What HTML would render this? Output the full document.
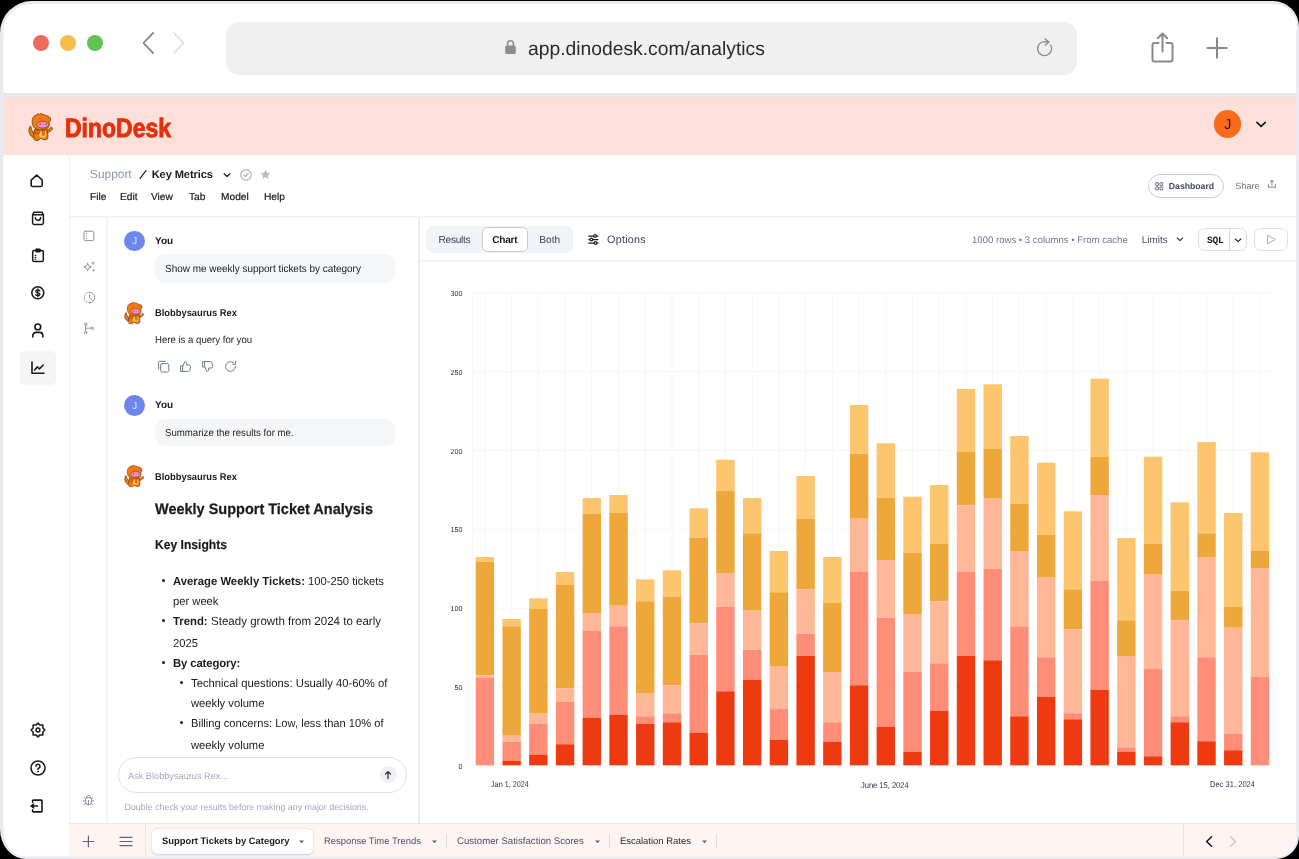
<!DOCTYPE html>
<html lang="en">
<head>
<meta charset="utf-8">
<title>DinoDesk Analytics</title>
<style>
*{box-sizing:border-box;margin:0;padding:0}
html,body{width:1299px;height:859px;overflow:hidden;background:#000}
body{font-family:"Liberation Sans",sans-serif;color:#111;position:relative;text-rendering:geometricPrecision}
.abs{position:absolute}
#frame{position:absolute;left:0;top:1px;width:1299px;height:858px;border:solid #e9eaf0;border-width:3px 2px 2px 3px;border-radius:32px 26px 23px 26px/32px 26px 23px 30px;background:#fff;overflow:hidden}
/* everything inside #page is positioned in full-image coordinates */
#page{position:absolute;left:-3px;top:-4px;width:1299px;height:859px;will-change:transform}
.t{position:absolute;white-space:nowrap;line-height:1}
svg{position:absolute;overflow:visible}
.ln{position:absolute;background:#e9eaf1}
.av{width:20.8px;height:20.8px;border-radius:50%;background:#6e86ea}
.bub{background:#f5f6f8;border-radius:9.5px}
.mn{font-size:10.2px;color:#161616;-webkit-text-stroke:.18px #161616}
</style>
</head>
<body>
<div id="frame"><div id="page">

<!-- ===== BROWSER CHROME ===== -->
<div class="abs" style="left:0;top:0;width:1299px;height:93px;background:#fff"></div>
<div class="abs" style="left:0;top:93px;width:1299px;height:4px;background:#e7e7e8"></div>
<div class="abs" style="left:33.3px;top:34.5px;width:16px;height:16px;border-radius:50%;background:#ed6a5e"></div>
<div class="abs" style="left:59.9px;top:34.5px;width:16px;height:16px;border-radius:50%;background:#f4bc4c"></div>
<div class="abs" style="left:87px;top:34.5px;width:16px;height:16px;border-radius:50%;background:#5fc452"></div>
<svg style="left:140px;top:30px" width="50" height="26" viewBox="0 0 50 26" fill="none" stroke-linecap="round" stroke-linejoin="round">
  <path d="M13.2 2.8 L3.4 13 L13.2 23.2" stroke="#808080" stroke-width="1.7"/>
  <path d="M33.8 2.8 L43.6 13 L33.8 23.2" stroke="#dedede" stroke-width="1.6"/>
</svg>
<div class="abs" style="left:226px;top:22px;width:851px;height:53px;border-radius:13px;background:#f0f0f0"></div>
<svg style="left:504px;top:39px" width="13" height="16" viewBox="0 0 13 16">
  <path d="M3.6 7 V4.6 a2.9 2.9 0 0 1 5.8 0 V7" fill="none" stroke="#8d8d8d" stroke-width="1.6"/>
  <rect x="1.2" y="6.6" width="10.6" height="8.4" rx="1.6" fill="#8d8d8d"/>
</svg>
<div class="t" id="url" style="left:528px;top:39.8px;font-size:19.3px;color:#2a2a2a;letter-spacing:0">app.dinodesk.com/analytics</div>
<svg style="left:1035px;top:37px" width="20" height="20" viewBox="0 0 20 20" fill="none" stroke="#8a8a8a" stroke-width="1.35" stroke-linecap="round" stroke-linejoin="round">
  <path d="M15.8 8.3 A7 7 0 1 1 9.5 4.6 L13.6 5"/>
  <path d="M10 1.7 L13.9 5.1 L10.2 8.3"/>
</svg>
<svg style="left:1150px;top:31px" width="26" height="33" viewBox="0 0 26 33" fill="none" stroke="#8a8a8a" stroke-width="2" stroke-linecap="round" stroke-linejoin="round">
  <path d="M8.5 12 H4.5 a2 2 0 0 0 -2 2 V28.5 a2 2 0 0 0 2 2 H20.5 a2 2 0 0 0 2 -2 V14 a2 2 0 0 0 -2 -2 H16.5"/>
  <path d="M12.5 20.5 V2.8 M7.8 7.2 L12.5 2.5 L17.2 7.2"/>
</svg>
<svg style="left:1204.5px;top:35.7px" width="24" height="24" viewBox="0 0 24 24" fill="none" stroke="#8a8a8a" stroke-width="2.1" stroke-linecap="round">
  <path d="M12 2.4 V21.6 M2.4 12 H21.6"/>
</svg>

<!-- ===== APP HEADER (pink) ===== -->
<div class="abs" style="left:0;top:97px;width:1299px;height:58px;background:#fde0da"></div>
<div class="abs" style="left:1213.8px;top:110.3px;width:27.4px;height:27.6px;border-radius:50%;background:#fa6b1b"></div>
<div class="t" style="left:1224.2px;top:118.3px;font-size:14.2px;color:#111">J</div>
<svg style="left:1255px;top:120px" width="12" height="8" viewBox="0 0 12 8" fill="none" stroke="#111" stroke-width="1.6" stroke-linecap="round" stroke-linejoin="round"><path d="M1.9 2.4 L6.1 6.3 L10.3 2.4"/></svg>

<!-- ===== STRUCTURE LINES ===== -->
<div class="ln" style="left:68.8px;top:155px;width:1.5px;height:668px;background:#eff0f4"></div>
<div class="ln" style="left:69px;top:216px;width:1230px;height:2px;background:#f2f3f7"></div>
<div class="ln" style="left:106.2px;top:217px;width:1.8px;height:606px;background:#f3f4f8"></div>
<div class="ln" style="left:418.1px;top:217px;width:1.9px;height:606px;background:#e9eaf3"></div>
<div class="ln" style="left:420px;top:260.2px;width:879px;height:2px;background:#f3f4f8"></div>
<div class="abs" style="left:69px;top:823px;width:1230px;height:36px;background:#fef4f2"></div>
<div class="ln" style="left:69px;top:822.6px;width:1230px;height:1.5px;background:#e7e8f0"></div>

<div class="abs" style="left:3px;top:0;width:1px;height:859px;background:rgba(233,234,240,.45);z-index:5"></div>
<div class="abs" style="left:0;top:856px;width:1299px;height:1px;background:rgba(233,234,240,.5);z-index:5"></div>
<div class="abs" style="left:1296px;top:0;width:1px;height:859px;background:rgba(233,234,240,.55);z-index:5"></div>
<!--NAV_S-->
<!-- ===== LEFT NAV ===== -->
<div class="abs" style="left:20px;top:351px;width:36px;height:34px;border-radius:5px;background:#f5f5f5"></div>
<svg style="left:29px;top:173px" width="16" height="16" viewBox="0 0 16 16" fill="none" stroke="#1a1a1a" stroke-width="1.6" stroke-linejoin="round" stroke-linecap="round">
  <path d="M2.2 7.2 L7.7 2 L13.2 7.2 V12.2 a1.3 1.3 0 0 1 -1.3 1.3 H3.5 a1.3 1.3 0 0 1 -1.3 -1.3 Z"/>
</svg>
<svg style="left:30px;top:210px" width="16" height="16" viewBox="0 0 16 16" fill="none" stroke="#1a1a1a" stroke-width="1.5" stroke-linejoin="round" stroke-linecap="round">
  <path d="M2.6 4.8 H13.4 V13 a1.4 1.4 0 0 1 -1.4 1.4 H4 a1.4 1.4 0 0 1 -1.4 -1.4 Z"/>
  <path d="M2.6 4.8 L4 2.2 H12 L13.4 4.8"/>
  <path d="M5.4 7.4 a2.6 2.9 0 0 0 5.2 0"/>
</svg>
<svg style="left:30px;top:247px" width="16" height="16" viewBox="0 0 16 16" fill="none" stroke="#1a1a1a" stroke-width="1.5" stroke-linejoin="round" stroke-linecap="round">
  <rect x="2.7" y="3.6" width="10.6" height="11" rx="1.4"/>
  <rect x="5.6" y="2" width="4.8" height="3" rx=".8" fill="#1a1a1a" stroke-width="1"/>
  <path d="M5.2 8.3 h.6 M5.2 10.3 h.6 M5.2 12.2 h.6" stroke-width="1.2"/>
</svg>
<svg style="left:30px;top:285px" width="16" height="16" viewBox="0 0 16 16" fill="none" stroke="#1a1a1a" stroke-width="1.6" stroke-linejoin="round" stroke-linecap="round">
  <circle cx="7.8" cy="7.8" r="6"/>
  <path d="M9.9 6 C9.4 5.2 8.6 5 7.8 5 C6.6 5 5.8 5.6 5.8 6.4 C5.8 7.3 6.6 7.6 7.8 7.8 C9 8 9.9 8.3 9.9 9.2 C9.9 10 9 10.6 7.8 10.6 C6.9 10.6 6.1 10.3 5.7 9.6 M7.8 3.9 V11.7" stroke-width="1.3"/>
</svg>
<svg style="left:30px;top:322px" width="16" height="17" viewBox="0 0 16 17" fill="none" stroke="#1a1a1a" stroke-width="1.6" stroke-linejoin="round" stroke-linecap="round">
  <circle cx="7.8" cy="4.9" r="2.9"/>
  <path d="M2.8 15 V13.6 a3.2 3.2 0 0 1 3.2 -3.2 H9.6 a3.2 3.2 0 0 1 3.2 3.2 V15"/>
</svg>
<svg style="left:30px;top:360px" width="16" height="16" viewBox="0 0 16 16" fill="none" stroke="#1a1a1a" stroke-width="1.6" stroke-linejoin="round" stroke-linecap="round">
  <path d="M2 2 V13.2 H14"/>
  <path d="M4.6 10 L7.4 6.9 L9.6 8.8 L13.2 5"/>
</svg>
<!-- bottom nav: settings, help, logout -->
<svg style="left:29.7px;top:721.8px" width="16" height="16" viewBox="0 0 16 16" fill="none" stroke="#1a1a1a" stroke-width="1.5" stroke-linejoin="round"><path d="M8.00 1.10 L10.03 3.10 L12.88 3.12 L12.90 5.97 L14.90 8.00 L12.90 10.03 L12.88 12.88 L10.03 12.90 L8.00 14.90 L5.97 12.90 L3.12 12.88 L3.10 10.03 L1.10 8.00 L3.10 5.97 L3.12 3.12 L5.97 3.10 Z"/><circle cx="8" cy="8" r="1.9"/></svg>
<svg style="left:29.8px;top:760.4px" width="16" height="16" viewBox="0 0 16 16" fill="none" stroke="#1a1a1a" stroke-width="1.6" stroke-linecap="round" stroke-linejoin="round">
  <circle cx="8" cy="8" r="7"/>
  <path d="M6 6.2 a2 2 0 1 1 2.9 1.8 c-.6 .3 -.9 .7 -.9 1.4" stroke-width="1.5"/>
  <circle cx="8" cy="11.6" r=".55" fill="#1a1a1a" stroke-width=".8"/>
</svg>
<svg style="left:29px;top:798px" width="16" height="16" viewBox="0 0 16 16" fill="none" stroke="#1a1a1a" stroke-width="1.6" stroke-linecap="round" stroke-linejoin="round">
  <path d="M3.6 4.2 V2.8 a.7 .7 0 0 1 .7 -.7 H12.3 a.7 .7 0 0 1 .7 .7 V13.2 a.7 .7 0 0 1 -.7 .7 H4.3 a.7 .7 0 0 1 -.7 -.7 V11.8"/>
  <path d="M8.6 8 H2.6"/>
  <path d="M4.4 5.9 L1.6 8 L4.4 10.1 Z" fill="#1a1a1a" stroke-width="1"/>
</svg>
<!--NAV_E-->
<!--TOPBAR_S-->
<!-- ===== LOGO ===== -->
<svg width="0" height="0" style="left:0;top:0">
  <defs>
    <linearGradient id="faceg" x1="0" y1="0" x2="1" y2="1"><stop offset="0" stop-color="#ff7fb0"/><stop offset=".6" stop-color="#f48fc8"/><stop offset="1" stop-color="#c79cf2"/></linearGradient>
    <symbol id="dino" viewBox="0 0 25 28">
      <g stroke="#6a300a" stroke-width=".75" stroke-linejoin="round" stroke-linecap="round">
      <!-- tail -->
      <path d="M2.1 13.4 C.2 16.4 .2 21.4 4.9 24.4 L7.6 22.4 C5.2 20.6 3.6 17.4 3 14 Z" fill="#f57a0c"/>
      <!-- right arm -->
      <path d="M18.6 17.4 C20.4 16.8 21.8 15.6 22.8 14.3 C24 13.9 25 15.2 24.4 16.2 C23 18 21.4 19 19.4 19.6 Z" fill="#f57a0c"/>
      <!-- body -->
      <path d="M6.6 16.6 C5.6 19.4 5.5 23 6.1 26.4 C6.3 27.9 10.9 27.9 11.3 26.4 L12.4 25.5 L13.8 25.5 C14.2 27.4 19.4 27.2 19.7 25.6 C20.2 22.6 20 19.4 18.8 16.4 Z" fill="#f57a0c"/>
      </g>
      <!-- belly -->
      <path d="M11.5 18.6 C10.8 21 11 23.4 12 24.6 L17 24.5 C18.4 22.8 18.5 20 17.8 18.2 Z" fill="#ffc56a"/>
      <!-- tie/zipper -->
      <path d="M14.4 17 L15.8 17 L16.8 21.6 L15.4 23 L14.2 21.6 Z" fill="#f57a0c" stroke="#6a300a" stroke-width=".45" stroke-linejoin="round"/>
      <!-- left arm -->
      <path d="M6.4 18.2 C8.2 17.4 10.6 17.6 11.6 18.6 C12.2 19.6 11.6 20.6 10.4 20.6 C9 20.6 7.4 20.2 6.4 19.6 Z" fill="#f57a0c" stroke="#6a300a" stroke-width=".6" stroke-linejoin="round"/>
      <!-- hood / head with snout and spikes -->
      <path d="M5.6 4 C6.2 2.4 7.6 2 8.6 2.4 C8.8 .8 10.4 .2 11.4 1.4 C12.4 .1 14.2 .3 14.8 1.8 C15.8 1.2 17.2 1.6 17.6 2.8 C19.2 2.6 20.8 3 21.6 4.2 C22.8 4.8 22.9 7.2 22 8.2 C21.8 8.6 21.4 8.8 21 8.8 C21.6 10.8 21.4 13.2 20 14.9 C17 17.4 9.4 17.4 6.5 14.9 C4.4 13 4 10 4.3 7.6 C4.1 6.2 4.6 4.8 5.6 4 Z" fill="#f57a0c" stroke="#6a300a" stroke-width=".75" stroke-linejoin="round"/>
      <!-- face -->
      <ellipse cx="14.7" cy="11.6" rx="6" ry="3.4" fill="url(#faceg)" stroke="#6a300a" stroke-width=".6"/>
      <circle cx="12.1" cy="11.2" r=".62" fill="#3a1a10"/><circle cx="18.1" cy="11.2" r=".62" fill="#3a1a10"/>
      <path d="M14.3 11.9 h1.6" stroke="#8a3a50" stroke-width=".35"/>
      <circle cx="11.9" cy="5.4" r=".55" fill="#6a300a"/><circle cx="17.9" cy="5.6" r=".45" fill="#6a300a"/><circle cx="20.3" cy="5.5" r=".45" fill="#6a300a"/>
    </symbol>
  </defs>
</svg>
<svg style="left:27.5px;top:113px" width="25" height="28"><use href="#dino"/></svg>
<svg style="left:64px;top:112px" width="112" height="32" viewBox="0 0 112 32">
  <text x="1" y="25" font-family="Liberation Sans, sans-serif" font-weight="bold" font-size="26.6" fill="#e5300d" stroke="#e5300d" stroke-width=".9" textLength="106" lengthAdjust="spacingAndGlyphs">DinoDesk</text>
</svg>

<!-- ===== TOP BAR (breadcrumb/menu) ===== -->
<div class="t" style="left:90px;top:168.5px;font-size:11.9px;color:#8c94aa" id="bc1">Support</div>
<svg style="left:138px;top:169px" width="10" height="11" viewBox="0 0 10 11"><path d="M2 9.6 L8 1.6" stroke="#222" stroke-width="1.2" stroke-linecap="round"/></svg>
<div class="t" style="left:151.7px;top:169.6px;font-size:11.1px;color:#1b1b1b;font-weight:bold;letter-spacing:-.1px" id="bc3">Key Metrics</div>
<svg style="left:222.2px;top:171.8px" width="10" height="7" viewBox="0 0 10 7" fill="none" stroke="#222" stroke-width="1.25" stroke-linecap="round" stroke-linejoin="round"><path d="M2.1 1.7 L5 4.5 L7.9 1.7"/></svg>
<svg style="left:239.6px;top:168.6px" width="12" height="12" viewBox="0 0 12 12" fill="none" stroke="#adadb3" stroke-width="1.15" stroke-linecap="round" stroke-linejoin="round"><circle cx="6" cy="6" r="5.2"/><path d="M3.8 6.2 L5.4 7.7 L8.3 4.5"/></svg>
<svg style="left:259.6px;top:169px" width="10.8" height="10.8" viewBox="0 0 12 12"><path d="M6 .8 L7.6 4.3 L11.4 4.7 L8.5 7.2 L9.4 11 L6 9 L2.6 11 L3.5 7.2 L.6 4.7 L4.4 4.3 Z" fill="#b9b9be"/></svg>
<div class="t mn" style="left:90px;top:192.8px">File</div>
<div class="t mn" style="left:120px;top:192.8px">Edit</div>
<div class="t mn" style="left:151px;top:192.8px">View</div>
<div class="t mn" style="left:189px;top:192.8px">Tab</div>
<div class="t mn" style="left:221px;top:192.8px">Model</div>
<div class="t mn" style="left:264px;top:192.8px">Help</div>
<div class="abs" style="left:1148px;top:174px;width:76px;height:23.5px;border:1px solid #c9ccd8;border-radius:12px;background:#fff"></div>
<svg style="left:1155.2px;top:181.6px" width="9" height="9" viewBox="0 0 9 9" fill="none" stroke="#5b6276" stroke-width=".9"><rect x=".7" y=".7" width="2.7" height="2.9" rx=".3"/><rect x=".7" y="5" width="2.7" height="2.9" rx=".3"/><rect x="5" y=".7" width="2.7" height="2.9" rx=".3"/><rect x="5" y="5" width="2.7" height="2.9" rx=".3"/></svg>
<div class="t" style="left:1168.8px;top:182.4px;font-size:8.75px;color:#454c60;font-weight:bold;letter-spacing:-.05px" id="dash">Dashboard</div>
<div class="t" style="left:1235.3px;top:182px;font-size:9.1px;color:#6b7283" id="share">Share</div>
<svg style="left:1267px;top:179px" width="10" height="10" viewBox="0 0 10 10" fill="none" stroke="#6b7283" stroke-width=".9" stroke-linecap="round" stroke-linejoin="round"><path d="M4.9 6 V1.3 M3.2 2.9 L4.9 1.2 L6.6 2.9 M1.4 5.6 V8.2 H8.4 V5.6"/></svg>

<!-- ===== MINI ICON COLUMN ===== -->
<svg style="left:83px;top:230px" width="12" height="12" viewBox="0 0 12 12" fill="none" stroke="#8891a8" stroke-width="1" stroke-linecap="round"><rect x="1" y="1.2" width="9.8" height="9.4" rx="1.2"/><path d="M3.5 3.6 h.01 M3.5 5.9 h.01 M3.5 8.2 h.01" stroke-width="1.1"/></svg>
<svg style="left:82.5px;top:260px" width="13" height="13" viewBox="0 0 13 13" fill="none" stroke="#8891a8" stroke-width="1" stroke-linejoin="round"><path d="M4.6 3.2 L5.7 5.9 L8.4 7 L5.7 8.1 L4.6 10.8 L3.5 8.1 L.8 7 L3.5 5.9 Z"/><path d="M10 1.2 L10.5 2.5 L11.8 3 L10.5 3.5 L10 4.8 L9.5 3.5 L8.2 3 L9.5 2.5 Z" fill="#98a0b6" stroke-width=".3"/><path d="M10.4 9 L10.8 9.9 L11.7 10.3 L10.8 10.7 L10.4 11.6 L10 10.7 L9.1 10.3 L10 9.9 Z" fill="#98a0b6" stroke-width=".3"/></svg>
<svg style="left:82.5px;top:291px" width="13" height="13" viewBox="0 0 13 13" fill="none" stroke="#8891a8" stroke-width="1" stroke-linecap="round" stroke-linejoin="round"><path d="M6.5 1.2 A5.3 5.3 0 1 1 6.5 11.8"/><path d="M6.5 11.8 A5.3 5.3 0 0 1 6.5 1.2" stroke-dasharray="1.5 1.6"/><path d="M6.5 3.8 V6.7 L8.4 7.9"/></svg>
<svg style="left:83px;top:322px" width="12" height="13" viewBox="0 0 12 13" fill="none" stroke="#8891a8" stroke-width="1" stroke-linecap="round" stroke-linejoin="round"><circle cx="2.6" cy="2.4" r="1.3"/><circle cx="2.6" cy="10.6" r="1.3"/><circle cx="9.2" cy="6.2" r="1.3"/><path d="M2.6 3.7 V9.3 M2.6 6.6 C2.6 6.2 3.4 6.2 7.9 6.2"/></svg>
<svg style="left:81.8px;top:794px" width="13" height="13" viewBox="0 0 13 13" fill="none" stroke="#8891a8" stroke-width="1" stroke-linecap="round" stroke-linejoin="round"><path d="M4.4 3.6 a2.1 2.1 0 0 1 4.2 0"/><path d="M3.6 5 a1.3 1.3 0 0 1 1.3 -1.3 h3.2 a1.3 1.3 0 0 1 1.3 1.3 v3 a2.9 2.9 0 0 1 -5.8 0 Z"/><path d="M6.5 6.4 V10.8 M3.6 6.9 H1.4 M11.6 6.9 H9.4 M3.7 5 L1.9 3.6 M9.3 5 L11.1 3.6 M3.9 9.3 L2 10.6 M9.1 9.3 L11 10.6"/></svg>
<!--TOPBAR_E-->
<!--CHAT_S-->
<!-- ===== CHAT PANEL ===== -->
<div class="abs av" style="left:124.2px;top:230.6px"></div>
<div class="t" id="c_1" style="left:132.3px;top:237.20px;font-size:9.8px;color:#e3e8ff">J</div>
<div class="t" id="c_you" style="left:155px;top:236.73px;font-size:10.0px;color:#1c1c1c;font-weight:bold">You</div>
<div class="abs bub" style="left:155px;top:254.4px;width:239.8px;height:28.2px"></div>
<div class="t" id="c_show" style="left:165px;top:264.95px;font-size:10.46px;color:#1c1c1c;transform:scaleX(0.9524);transform-origin:0 50%">Show me weekly support tickets by category</div>
<svg style="left:123.8px;top:302px" width="20" height="22.4"><use href="#dino"/></svg>
<div class="t" id="c_bot" style="left:155px;top:308.80px;font-size:9.8px;color:#1c1c1c;font-weight:bold;transform:scaleX(.953);transform-origin:0 50%">Blobbysaurus Rex</div>
<div class="t" id="c_here" style="left:155px;top:335.77px;font-size:10.08px;color:#1c1c1c;transform:scaleX(0.9524);transform-origin:0 50%">Here is a query for you</div>
<svg style="left:157px;top:359.5px" width="13" height="13" viewBox="0 0 13 13" fill="none" stroke="#717a8d" stroke-width="1" stroke-linecap="round" stroke-linejoin="round"><rect x="3.6" y="3.6" width="8.2" height="8.4" rx="1.6"/><path d="M1.6 9 V2.2 a.9 .9 0 0 1 .9 -.9 H8.6"/></svg>
<svg style="left:179px;top:359.5px" width="13" height="13" viewBox="0 0 13 13" fill="none" stroke="#717a8d" stroke-width="1" stroke-linecap="round" stroke-linejoin="round"><path d="M3.9 5.9 L6 1.5 c.9 0 1.6 .7 1.6 1.6 V5 h2.8 c.8 0 1.3 .7 1.2 1.4 l-.7 4 c-.1 .6 -.6 1 -1.2 1 H3.9 Z"/><path d="M3.9 5.9 H1.6 V11.4 H3.9"/></svg>
<svg style="left:201.5px;top:360px" width="13" height="13" viewBox="0 0 13 13" fill="none" stroke="#717a8d" stroke-width="1" stroke-linecap="round" stroke-linejoin="round"><g transform="translate(-1 13) scale(1 -1)"><path d="M3.9 5.9 L6 1.5 c.9 0 1.6 .7 1.6 1.6 V5 h2.8 c.8 0 1.3 .7 1.2 1.4 l-.7 4 c-.1 .6 -.6 1 -1.2 1 H3.9 Z"/><path d="M3.9 5.9 H1.6 V11.4 H3.9"/></g></svg>
<svg style="left:223.5px;top:359.5px" width="13" height="13" viewBox="0 0 13 13" fill="none" stroke="#717a8d" stroke-width="1" stroke-linecap="round" stroke-linejoin="round"><path d="M11.4 6.5 A4.9 4.9 0 1 1 9.6 2.7"/><path d="M11.6 1.2 V4.2 H8.6"/></svg>
<div class="abs av" style="left:124.2px;top:394.8px"></div>
<div class="t" id="c_6" style="left:132.3px;top:402.40px;font-size:9.8px;color:#e3e8ff">J</div>
<div class="t" id="c_7" style="left:155px;top:400.74px;font-size:10.0px;color:#1c1c1c;font-weight:bold">You</div>
<div class="abs bub" style="left:155px;top:418.8px;width:239.8px;height:27.6px"></div>
<div class="t" id="c_sum" style="left:165px;top:429.31px;font-size:10.15px;color:#1c1c1c;transform:scaleX(0.9524);transform-origin:0 50%">Summarize the results for me.</div>
<svg style="left:123.8px;top:464.8px" width="20" height="22.4"><use href="#dino"/></svg>
<div class="t" id="c_9" style="left:155px;top:473.00px;font-size:9.8px;color:#1c1c1c;font-weight:bold;transform:scaleX(.953);transform-origin:0 50%">Blobbysaurus Rex</div>
<div class="t" id="c_h1" style="left:155px;top:501.83px;font-size:15.2px;color:#1c1c1c;font-weight:bold;transform:scaleX(.954);transform-origin:0 50%;-webkit-text-stroke:.25px #1c1c1c">Weekly Support Ticket Analysis</div>
<div class="t" id="c_h2" style="left:155px;top:538.01px;font-size:13.1px;color:#1c1c1c;font-weight:bold;transform:scaleX(.924);transform-origin:0 50%;-webkit-text-stroke:.2px #1c1c1c">Key Insights</div>
<div class="abs" style="left:162.1px;top:579.0px;width:3.2px;height:3.2px;border-radius:50%;background:#1c1c1c"></div>
<div class="t" id="c_avg" style="left:173px;top:575.92px;font-size:11.67px;color:#1c1c1c;font-weight:bold;transform:scaleX(0.9709);transform-origin:0 50%">Average Weekly Tickets:</div>
<div class="t" id="c_100" style="left:308px;top:577.03px;font-size:11.54px;color:#1c1c1c;transform:scaleX(0.9709);transform-origin:0 50%">100-250 tickets</div>
<div class="t" id="c_14" style="left:173px;top:597.13px;font-size:11.54px;color:#1c1c1c;transform:scaleX(0.9709);transform-origin:0 50%">per week</div>
<div class="abs" style="left:162.1px;top:619.0px;width:3.2px;height:3.2px;border-radius:50%;background:#1c1c1c"></div>
<div class="t" id="c_tr" style="left:173px;top:616.02px;font-size:11.67px;color:#1c1c1c;font-weight:bold;transform:scaleX(0.9709);transform-origin:0 50%">Trend:</div>
<div class="t" id="c_st" style="left:211px;top:615.83px;font-size:11.9px;color:#1c1c1c;transform:scaleX(0.9709);transform-origin:0 50%">Steady growth from 2024 to early</div>
<div class="t" id="c_17" style="left:173px;top:639.13px;font-size:11.54px;color:#1c1c1c;transform:scaleX(0.9709);transform-origin:0 50%">2025</div>
<div class="abs" style="left:162.1px;top:661.0px;width:3.2px;height:3.2px;border-radius:50%;background:#1c1c1c"></div>
<div class="t" id="c_18" style="left:173px;top:657.82px;font-size:11.67px;color:#1c1c1c;font-weight:bold;letter-spacing:-.12px;transform:scaleX(0.9709);transform-origin:0 50%">By category:</div>
<div class="abs" style="left:180.1px;top:681.0px;width:3.2px;height:3.2px;border-radius:50%;background:#1c1c1c"></div>
<div class="t" id="c_tech" style="left:191px;top:677.95px;font-size:11.64px;color:#1c1c1c;transform:scaleX(0.9709);transform-origin:0 50%">Technical questions: Usually 40-60% of</div>
<div class="t" id="c_20" style="left:191px;top:699.23px;font-size:11.54px;color:#1c1c1c;transform:scaleX(0.9709);transform-origin:0 50%">weekly volume</div>
<div class="abs" style="left:180.1px;top:721.0px;width:3.2px;height:3.2px;border-radius:50%;background:#1c1c1c"></div>
<div class="t" id="c_bill" style="left:191px;top:719.28px;font-size:11.48px;color:#1c1c1c;transform:scaleX(0.9709);transform-origin:0 50%">Billing concerns: Low, less than 10% of</div>
<div class="t" id="c_22" style="left:191px;top:740.93px;font-size:11.54px;color:#1c1c1c;transform:scaleX(0.9709);transform-origin:0 50%">weekly volume</div>
<div class="abs" style="left:118px;top:757.3px;width:289px;height:35.6px;border:1px solid #dcdfe9;border-radius:18px;background:#fff"></div>
<div class="t" id="c_ask" style="left:128px;top:772.01px;font-size:9.2px;color:#a3a9b9">Ask Blobbysaurus Rex...</div>
<div class="abs" style="left:379.6px;top:765.8px;width:17.4px;height:17.4px;border-radius:50%;background:#eef0f4"></div>
<svg style="left:383.3px;top:769.5px" width="10" height="10" viewBox="0 0 10 10" fill="none" stroke="#222" stroke-width="1.2" stroke-linecap="round" stroke-linejoin="round"><path d="M5 8.4 V1.8 M2.4 4.2 L5 1.6 L7.6 4.2"/></svg>
<div class="t" id="c_dbl" style="left:124.5px;top:803.37px;font-size:8.9px;color:#a3a9b9">Double check your results before making any major decisions.</div>
<!--CHAT_E-->
<!--TOOLBAR_S-->
<!-- ===== CHART TOOLBAR ===== -->
<div class="abs" style="left:426.2px;top:225.8px;width:147px;height:27.4px;border-radius:7px;background:#f0f3f7"></div>
<div class="abs" style="left:482.2px;top:227.4px;width:46px;height:24.2px;border-radius:5.5px;background:#fff;border:1px solid #c8c9cd"></div>
<div class="t" id="t_res" style="left:438.5px;top:236.17px;font-size:10.2px;color:#3a4152;letter-spacing:-.3px">Results</div>
<div class="t" id="t_chart" style="left:492.3px;top:236.25px;font-size:10.1px;color:#1b1b1b;font-weight:bold;letter-spacing:-.28px">Chart</div>
<div class="t" id="t_both" style="left:539.2px;top:236.17px;font-size:10.2px;color:#3a4152">Both</div>
<svg style="left:587px;top:233px" width="13" height="13" viewBox="0 0 13 13" fill="none" stroke="#1c1c1c" stroke-width="1.25" stroke-linecap="round"><path d="M1.8 3 H11 M1.8 6.5 H11 M1.8 10 H11"/><circle cx="8" cy="3" r="1.35" fill="#fff" stroke-width="1.1"/><circle cx="4.4" cy="6.5" r="1.35" fill="#fff" stroke-width="1.1"/><circle cx="8.6" cy="10" r="1.35" fill="#fff" stroke-width="1.1"/></svg>
<div class="t" id="t_opt" style="left:607px;top:235.06px;font-size:10.8px;color:#3a4152;letter-spacing:.25px">Options</div>
<div class="t" id="t_rows" style="left:972px;top:235.58px;font-size:9.59px;color:#737a8b">1000 rows • 3 columns • From cache</div>
<div class="t" id="t_lim" style="left:1141.8px;top:235.62px;font-size:9.9px;color:#474d5e">Limits</div>
<svg style="left:1175px;top:236.3px" width="10" height="7" viewBox="0 0 10 7" fill="none" stroke="#333" stroke-width="1.1" stroke-linecap="round" stroke-linejoin="round"><path d="M2.2 2 L4.9 4.6 L7.6 2"/></svg>
<div class="abs" style="left:1198.4px;top:227.5px;width:48.2px;height:23.8px;border-radius:6.5px;background:#fff;border:1px solid #dadeea"></div>
<div class="abs" style="left:1229px;top:228px;width:1px;height:23px;background:#d6dae6"></div>
<div class="t" id="t_sql" style="left:1207px;top:235.97px;font-size:9.6px;color:#1b1b1b;font-weight:bold;font-family:'Liberation Mono',monospace;letter-spacing:-.2px">SQL</div>
<svg style="left:1233px;top:236.5px" width="10" height="7" viewBox="0 0 10 7" fill="none" stroke="#222" stroke-width="1.1" stroke-linecap="round" stroke-linejoin="round"><path d="M2.3 2 L5.1 4.6 L7.9 2"/></svg>
<div class="abs" style="left:1253.6px;top:227.5px;width:34px;height:23.8px;border-radius:6.5px;background:#fff;border:1px solid #dadeea"></div>
<svg style="left:1266px;top:234px" width="11" height="11" viewBox="0 0 11 11" fill="none" stroke="#a6abb9" stroke-width="1" stroke-linejoin="round"><path d="M1.6 1.2 L9.4 5.5 L1.6 9.8 Z"/></svg>
<!-- ===== BOTTOM TABS ===== -->
<svg style="left:82px;top:835px" width="13" height="13" viewBox="0 0 13 13" fill="none" stroke="#5d6579" stroke-width="1.2" stroke-linecap="round"><path d="M6.4 1.2 V11.8 M1.1 6.5 H11.7"/></svg>
<svg style="left:119px;top:835px" width="14" height="13" viewBox="0 0 14 13" fill="none" stroke="#5d6579" stroke-width="1.2" stroke-linecap="round"><path d="M1 2.4 H13 M1 6.5 H13 M1 10.6 H13"/></svg>
<div class="abs" style="left:144.5px;top:824px;width:1px;height:32px;background:#e8e3e6"></div>
<div class="abs" style="left:152px;top:829px;width:161px;height:25px;border-radius:5px;background:#fff;box-shadow:0 .5px 2px rgba(40,30,60,.22)"></div>
<div class="t" id="b_1" style="left:162px;top:836.04px;font-size:9.4px;color:#1b1b1b;font-weight:bold">Support Tickets by Category</div>
<div class="t" id="b_2" style="left:324px;top:836.02px;font-size:9.43px;color:#4a5163">Response Time Trends</div>
<div class="t" id="b_3" style="left:457px;top:836.84px;font-size:9.64px;color:#4a5163">Customer Satisfaction Scores</div>
<div class="t" id="b_4" style="left:620px;top:836.99px;font-size:9.46px;color:#1f2430">Escalation Rates</div>
<svg style="left:298px;top:839.6px" width="7" height="4" viewBox="0 0 7 4"><path d="M1 .5 H6 L3.5 3.2 Z" fill="#5d6579"/></svg>
<svg style="left:431px;top:839.6px" width="7" height="4" viewBox="0 0 7 4"><path d="M1 .5 H6 L3.5 3.2 Z" fill="#5d6579"/></svg>
<svg style="left:594px;top:839.6px" width="7" height="4" viewBox="0 0 7 4"><path d="M1 .5 H6 L3.5 3.2 Z" fill="#5d6579"/></svg>
<svg style="left:701px;top:839.6px" width="7" height="4" viewBox="0 0 7 4"><path d="M1 .5 H6 L3.5 3.2 Z" fill="#5d6579"/></svg>
<div class="abs" style="left:445.5px;top:834px;width:1px;height:15px;background:#e3dcdf"></div>
<div class="abs" style="left:609px;top:834px;width:1px;height:15px;background:#e3dcdf"></div>
<div class="abs" style="left:716px;top:834px;width:1px;height:15px;background:#e3dcdf"></div>
<div class="abs" style="left:1183px;top:824px;width:1px;height:32px;background:#e8e3e6"></div>
<svg style="left:1203px;top:835px" width="12" height="13" viewBox="0 0 12 13" fill="none" stroke="#111" stroke-width="1.5" stroke-linecap="round" stroke-linejoin="round"><path d="M8.6 1.8 L3.6 6.5 L8.6 11.2"/></svg>
<svg style="left:1227px;top:835px" width="12" height="13" viewBox="0 0 12 13" fill="none" stroke="#c9c4c4" stroke-width="1.3" stroke-linecap="round" stroke-linejoin="round"><path d="M3.6 1.8 L8.6 6.5 L3.6 11.2"/></svg>
<!--TOOLBAR_E-->
<!--CHART_S-->
<svg id="chart" style="left:0;top:0" width="1299" height="859" viewBox="0 0 1299 859" shape-rendering="auto">
<g stroke="#f6f6f8" stroke-width="1">
<line x1="473" y1="292.8" x2="1274" y2="292.8"/>
<line x1="473" y1="371.6" x2="1274" y2="371.6"/>
<line x1="473" y1="450.5" x2="1274" y2="450.5"/>
<line x1="473" y1="529.4" x2="1274" y2="529.4"/>
<line x1="473" y1="608.2" x2="1274" y2="608.2"/>
<line x1="473" y1="687.0" x2="1274" y2="687.0"/>
<line x1="473" y1="765.8" x2="1274" y2="765.8"/>
<line x1="484.9" y1="292.8" x2="484.9" y2="765.8"/>
<line x1="511.6" y1="292.8" x2="511.6" y2="765.8"/>
<line x1="538.4" y1="292.8" x2="538.4" y2="765.8"/>
<line x1="565.1" y1="292.8" x2="565.1" y2="765.8"/>
<line x1="591.8" y1="292.8" x2="591.8" y2="765.8"/>
<line x1="618.5" y1="292.8" x2="618.5" y2="765.8"/>
<line x1="645.3" y1="292.8" x2="645.3" y2="765.8"/>
<line x1="672.0" y1="292.8" x2="672.0" y2="765.8"/>
<line x1="698.7" y1="292.8" x2="698.7" y2="765.8"/>
<line x1="725.4" y1="292.8" x2="725.4" y2="765.8"/>
<line x1="752.2" y1="292.8" x2="752.2" y2="765.8"/>
<line x1="778.9" y1="292.8" x2="778.9" y2="765.8"/>
<line x1="805.6" y1="292.8" x2="805.6" y2="765.8"/>
<line x1="832.4" y1="292.8" x2="832.4" y2="765.8"/>
<line x1="859.1" y1="292.8" x2="859.1" y2="765.8"/>
<line x1="885.8" y1="292.8" x2="885.8" y2="765.8"/>
<line x1="912.5" y1="292.8" x2="912.5" y2="765.8"/>
<line x1="939.3" y1="292.8" x2="939.3" y2="765.8"/>
<line x1="966.0" y1="292.8" x2="966.0" y2="765.8"/>
<line x1="992.7" y1="292.8" x2="992.7" y2="765.8"/>
<line x1="1019.4" y1="292.8" x2="1019.4" y2="765.8"/>
<line x1="1046.2" y1="292.8" x2="1046.2" y2="765.8"/>
<line x1="1072.9" y1="292.8" x2="1072.9" y2="765.8"/>
<line x1="1099.6" y1="292.8" x2="1099.6" y2="765.8"/>
<line x1="1126.3" y1="292.8" x2="1126.3" y2="765.8"/>
<line x1="1153.1" y1="292.8" x2="1153.1" y2="765.8"/>
<line x1="1179.8" y1="292.8" x2="1179.8" y2="765.8"/>
<line x1="1206.5" y1="292.8" x2="1206.5" y2="765.8"/>
<line x1="1233.3" y1="292.8" x2="1233.3" y2="765.8"/>
<line x1="1260.0" y1="292.8" x2="1260.0" y2="765.8"/>
<line x1="472.8" y1="292.8" x2="472.8" y2="765.8"/>
</g>
<rect x="475.70" y="557.0" width="18.4" height="4.7" fill="#fdc56d"/>
<rect x="475.70" y="561.7" width="18.4" height="113.6" fill="#eea73a"/>
<rect x="475.70" y="675.3" width="18.4" height="2.7" fill="#ffb798"/>
<rect x="475.70" y="678.0" width="18.4" height="87.3" fill="#ff8d77"/>
<rect x="502.43" y="619.0" width="18.4" height="7.3" fill="#fdc56d"/>
<rect x="502.43" y="626.3" width="18.4" height="109.4" fill="#eea73a"/>
<rect x="502.43" y="735.7" width="18.4" height="6.0" fill="#ffb798"/>
<rect x="502.43" y="741.7" width="18.4" height="19.0" fill="#ff8d77"/>
<rect x="502.43" y="760.7" width="18.4" height="4.6" fill="#ee3a10"/>
<rect x="529.15" y="598.3" width="18.4" height="10.4" fill="#fdc56d"/>
<rect x="529.15" y="608.7" width="18.4" height="105.0" fill="#eea73a"/>
<rect x="529.15" y="713.7" width="18.4" height="10.0" fill="#ffb798"/>
<rect x="529.15" y="723.7" width="18.4" height="31.0" fill="#ff8d77"/>
<rect x="529.15" y="754.7" width="18.4" height="10.6" fill="#ee3a10"/>
<rect x="555.88" y="572.0" width="18.4" height="13.0" fill="#fdc56d"/>
<rect x="555.88" y="585.0" width="18.4" height="103.3" fill="#eea73a"/>
<rect x="555.88" y="688.3" width="18.4" height="13.4" fill="#ffb798"/>
<rect x="555.88" y="701.7" width="18.4" height="42.6" fill="#ff8d77"/>
<rect x="555.88" y="744.3" width="18.4" height="21.0" fill="#ee3a10"/>
<rect x="582.61" y="498.0" width="18.4" height="16.0" fill="#fdc56d"/>
<rect x="582.61" y="514.0" width="18.4" height="99.0" fill="#eea73a"/>
<rect x="582.61" y="613.0" width="18.4" height="17.7" fill="#ffb798"/>
<rect x="582.61" y="630.7" width="18.4" height="87.0" fill="#ff8d77"/>
<rect x="582.61" y="717.7" width="18.4" height="47.6" fill="#ee3a10"/>
<rect x="609.34" y="495.0" width="18.4" height="17.7" fill="#fdc56d"/>
<rect x="609.34" y="512.7" width="18.4" height="93.0" fill="#eea73a"/>
<rect x="609.34" y="605.7" width="18.4" height="20.6" fill="#ffb798"/>
<rect x="609.34" y="626.3" width="18.4" height="88.4" fill="#ff8d77"/>
<rect x="609.34" y="714.7" width="18.4" height="50.6" fill="#ee3a10"/>
<rect x="636.06" y="579.3" width="18.4" height="22.0" fill="#fdc56d"/>
<rect x="636.06" y="601.3" width="18.4" height="91.7" fill="#eea73a"/>
<rect x="636.06" y="693.0" width="18.4" height="23.3" fill="#ffb798"/>
<rect x="636.06" y="716.3" width="18.4" height="7.4" fill="#ff8d77"/>
<rect x="636.06" y="723.7" width="18.4" height="41.6" fill="#ee3a10"/>
<rect x="662.79" y="570.3" width="18.4" height="26.4" fill="#fdc56d"/>
<rect x="662.79" y="596.7" width="18.4" height="88.6" fill="#eea73a"/>
<rect x="662.79" y="685.3" width="18.4" height="28.0" fill="#ffb798"/>
<rect x="662.79" y="713.3" width="18.4" height="9.0" fill="#ff8d77"/>
<rect x="662.79" y="722.3" width="18.4" height="43.0" fill="#ee3a10"/>
<rect x="689.52" y="508.3" width="18.4" height="29.4" fill="#fdc56d"/>
<rect x="689.52" y="537.7" width="18.4" height="85.6" fill="#eea73a"/>
<rect x="689.52" y="623.3" width="18.4" height="31.4" fill="#ffb798"/>
<rect x="689.52" y="654.7" width="18.4" height="78.0" fill="#ff8d77"/>
<rect x="689.52" y="732.7" width="18.4" height="32.6" fill="#ee3a10"/>
<rect x="716.24" y="459.7" width="18.4" height="31.0" fill="#fdc56d"/>
<rect x="716.24" y="490.7" width="18.4" height="82.3" fill="#eea73a"/>
<rect x="716.24" y="573.0" width="18.4" height="34.0" fill="#ffb798"/>
<rect x="716.24" y="607.0" width="18.4" height="84.3" fill="#ff8d77"/>
<rect x="716.24" y="691.3" width="18.4" height="74.0" fill="#ee3a10"/>
<rect x="742.97" y="498.0" width="18.4" height="35.3" fill="#fdc56d"/>
<rect x="742.97" y="533.3" width="18.4" height="76.7" fill="#eea73a"/>
<rect x="742.97" y="610.0" width="18.4" height="39.7" fill="#ffb798"/>
<rect x="742.97" y="649.7" width="18.4" height="30.0" fill="#ff8d77"/>
<rect x="742.97" y="679.7" width="18.4" height="85.6" fill="#ee3a10"/>
<rect x="769.70" y="551.0" width="18.4" height="41.3" fill="#fdc56d"/>
<rect x="769.70" y="592.3" width="18.4" height="73.7" fill="#eea73a"/>
<rect x="769.70" y="666.0" width="18.4" height="43.0" fill="#ffb798"/>
<rect x="769.70" y="709.0" width="18.4" height="31.0" fill="#ff8d77"/>
<rect x="769.70" y="740.0" width="18.4" height="25.3" fill="#ee3a10"/>
<rect x="796.42" y="476.0" width="18.4" height="42.7" fill="#fdc56d"/>
<rect x="796.42" y="518.7" width="18.4" height="70.6" fill="#eea73a"/>
<rect x="796.42" y="589.3" width="18.4" height="44.4" fill="#ffb798"/>
<rect x="796.42" y="633.7" width="18.4" height="22.3" fill="#ff8d77"/>
<rect x="796.42" y="656.0" width="18.4" height="109.3" fill="#ee3a10"/>
<rect x="823.15" y="557.0" width="18.4" height="45.7" fill="#fdc56d"/>
<rect x="823.15" y="602.7" width="18.4" height="69.3" fill="#eea73a"/>
<rect x="823.15" y="672.0" width="18.4" height="50.3" fill="#ffb798"/>
<rect x="823.15" y="722.3" width="18.4" height="19.4" fill="#ff8d77"/>
<rect x="823.15" y="741.7" width="18.4" height="23.6" fill="#ee3a10"/>
<rect x="849.88" y="405.0" width="18.4" height="48.7" fill="#fdc56d"/>
<rect x="849.88" y="453.7" width="18.4" height="65.0" fill="#eea73a"/>
<rect x="849.88" y="518.7" width="18.4" height="53.0" fill="#ffb798"/>
<rect x="849.88" y="571.7" width="18.4" height="113.6" fill="#ff8d77"/>
<rect x="849.88" y="685.3" width="18.4" height="80.0" fill="#ee3a10"/>
<rect x="876.61" y="443.3" width="18.4" height="54.7" fill="#fdc56d"/>
<rect x="876.61" y="498.0" width="18.4" height="62.0" fill="#eea73a"/>
<rect x="876.61" y="560.0" width="18.4" height="57.7" fill="#ffb798"/>
<rect x="876.61" y="617.7" width="18.4" height="109.0" fill="#ff8d77"/>
<rect x="876.61" y="726.7" width="18.4" height="38.6" fill="#ee3a10"/>
<rect x="903.33" y="496.7" width="18.4" height="56.0" fill="#fdc56d"/>
<rect x="903.33" y="552.7" width="18.4" height="62.0" fill="#eea73a"/>
<rect x="903.33" y="614.7" width="18.4" height="57.3" fill="#ffb798"/>
<rect x="903.33" y="672.0" width="18.4" height="79.7" fill="#ff8d77"/>
<rect x="903.33" y="751.7" width="18.4" height="13.6" fill="#ee3a10"/>
<rect x="930.06" y="485.0" width="18.4" height="58.7" fill="#fdc56d"/>
<rect x="930.06" y="543.7" width="18.4" height="57.6" fill="#eea73a"/>
<rect x="930.06" y="601.3" width="18.4" height="62.0" fill="#ffb798"/>
<rect x="930.06" y="663.3" width="18.4" height="47.4" fill="#ff8d77"/>
<rect x="930.06" y="710.7" width="18.4" height="54.6" fill="#ee3a10"/>
<rect x="956.79" y="389.0" width="18.4" height="63.0" fill="#fdc56d"/>
<rect x="956.79" y="452.0" width="18.4" height="53.3" fill="#eea73a"/>
<rect x="956.79" y="505.3" width="18.4" height="66.4" fill="#ffb798"/>
<rect x="956.79" y="571.7" width="18.4" height="84.3" fill="#ff8d77"/>
<rect x="956.79" y="656.0" width="18.4" height="109.3" fill="#ee3a10"/>
<rect x="983.51" y="384.3" width="18.4" height="64.7" fill="#fdc56d"/>
<rect x="983.51" y="449.0" width="18.4" height="49.0" fill="#eea73a"/>
<rect x="983.51" y="498.0" width="18.4" height="70.7" fill="#ffb798"/>
<rect x="983.51" y="568.7" width="18.4" height="91.6" fill="#ff8d77"/>
<rect x="983.51" y="660.3" width="18.4" height="105.0" fill="#ee3a10"/>
<rect x="1010.24" y="436.0" width="18.4" height="67.7" fill="#fdc56d"/>
<rect x="1010.24" y="503.7" width="18.4" height="47.3" fill="#eea73a"/>
<rect x="1010.24" y="551.0" width="18.4" height="75.3" fill="#ffb798"/>
<rect x="1010.24" y="626.3" width="18.4" height="90.0" fill="#ff8d77"/>
<rect x="1010.24" y="716.3" width="18.4" height="49.0" fill="#ee3a10"/>
<rect x="1036.97" y="462.7" width="18.4" height="72.0" fill="#fdc56d"/>
<rect x="1036.97" y="534.7" width="18.4" height="43.0" fill="#eea73a"/>
<rect x="1036.97" y="577.7" width="18.4" height="79.6" fill="#ffb798"/>
<rect x="1036.97" y="657.3" width="18.4" height="39.7" fill="#ff8d77"/>
<rect x="1036.97" y="697.0" width="18.4" height="68.3" fill="#ee3a10"/>
<rect x="1063.69" y="511.3" width="18.4" height="78.0" fill="#fdc56d"/>
<rect x="1063.69" y="589.3" width="18.4" height="40.0" fill="#eea73a"/>
<rect x="1063.69" y="629.3" width="18.4" height="84.0" fill="#ffb798"/>
<rect x="1063.69" y="713.3" width="18.4" height="6.0" fill="#ff8d77"/>
<rect x="1063.69" y="719.3" width="18.4" height="46.0" fill="#ee3a10"/>
<rect x="1090.42" y="378.7" width="18.4" height="78.0" fill="#fdc56d"/>
<rect x="1090.42" y="456.7" width="18.4" height="38.3" fill="#eea73a"/>
<rect x="1090.42" y="495.0" width="18.4" height="85.7" fill="#ffb798"/>
<rect x="1090.42" y="580.7" width="18.4" height="109.0" fill="#ff8d77"/>
<rect x="1090.42" y="689.7" width="18.4" height="75.6" fill="#ee3a10"/>
<rect x="1117.15" y="538.0" width="18.4" height="82.3" fill="#fdc56d"/>
<rect x="1117.15" y="620.3" width="18.4" height="35.7" fill="#eea73a"/>
<rect x="1117.15" y="656.0" width="18.4" height="91.3" fill="#ffb798"/>
<rect x="1117.15" y="747.3" width="18.4" height="4.4" fill="#ff8d77"/>
<rect x="1117.15" y="751.7" width="18.4" height="13.6" fill="#ee3a10"/>
<rect x="1143.88" y="456.7" width="18.4" height="87.0" fill="#fdc56d"/>
<rect x="1143.88" y="543.7" width="18.4" height="31.0" fill="#eea73a"/>
<rect x="1143.88" y="574.7" width="18.4" height="94.3" fill="#ffb798"/>
<rect x="1143.88" y="669.0" width="18.4" height="87.3" fill="#ff8d77"/>
<rect x="1143.88" y="756.3" width="18.4" height="9.0" fill="#ee3a10"/>
<rect x="1170.60" y="502.3" width="18.4" height="88.4" fill="#fdc56d"/>
<rect x="1170.60" y="590.7" width="18.4" height="29.6" fill="#eea73a"/>
<rect x="1170.60" y="620.3" width="18.4" height="96.0" fill="#ffb798"/>
<rect x="1170.60" y="716.3" width="18.4" height="6.0" fill="#ff8d77"/>
<rect x="1170.60" y="722.3" width="18.4" height="43.0" fill="#ee3a10"/>
<rect x="1197.33" y="442.0" width="18.4" height="91.3" fill="#fdc56d"/>
<rect x="1197.33" y="533.3" width="18.4" height="23.7" fill="#eea73a"/>
<rect x="1197.33" y="557.0" width="18.4" height="100.3" fill="#ffb798"/>
<rect x="1197.33" y="657.3" width="18.4" height="84.0" fill="#ff8d77"/>
<rect x="1197.33" y="741.3" width="18.4" height="24.0" fill="#ee3a10"/>
<rect x="1224.06" y="513.0" width="18.4" height="94.0" fill="#fdc56d"/>
<rect x="1224.06" y="607.0" width="18.4" height="20.7" fill="#eea73a"/>
<rect x="1224.06" y="627.7" width="18.4" height="106.3" fill="#ffb798"/>
<rect x="1224.06" y="734.0" width="18.4" height="16.3" fill="#ff8d77"/>
<rect x="1224.06" y="750.3" width="18.4" height="15.0" fill="#ee3a10"/>
<rect x="1250.78" y="452.3" width="18.4" height="98.7" fill="#fdc56d"/>
<rect x="1250.78" y="551.0" width="18.4" height="17.7" fill="#eea73a"/>
<rect x="1250.78" y="568.7" width="18.4" height="108.0" fill="#ffb798"/>
<rect x="1250.78" y="676.7" width="18.4" height="88.6" fill="#ff8d77"/>
<g font-family="Liberation Sans, sans-serif" font-size="7.15" fill="#2b303b" text-anchor="end">
<text x="462.4" y="295.8">300</text>
<text x="462.4" y="374.6">250</text>
<text x="462.4" y="453.5">200</text>
<text x="462.4" y="532.4">150</text>
<text x="462.4" y="611.2">100</text>
<text x="462.4" y="690.0">50</text>
<text x="462.4" y="768.8">0</text>
</g>
<g font-family="Liberation Sans, sans-serif" font-size="8.3" fill="#2f3440">
<text x="491" y="787" textLength="37.8" lengthAdjust="spacingAndGlyphs">Jan 1, 2024</text>
<text x="861" y="788" textLength="47.6" lengthAdjust="spacingAndGlyphs">June 15, 2024</text>
<text x="1210" y="787" textLength="45" lengthAdjust="spacingAndGlyphs">Dec 31, 2024</text>
</g>
</svg>
<!--CHART_E-->

</div></div>
</body>
</html>
